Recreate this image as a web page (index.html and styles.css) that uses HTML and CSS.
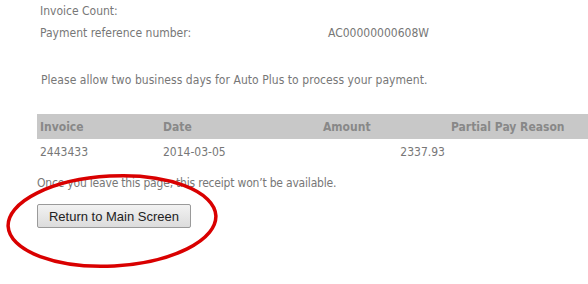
FILE: index.html
```html
<!DOCTYPE html>
<html>
<head>
<meta charset="utf-8">
<link rel="stylesheet" href="styles.css">
</head>
<body>
<div class="page">
  <div class="info">
    <div class="info-row"><span class="label">Invoice Count:</span><span class="value"></span></div>
    <div class="info-row"><span class="label">Payment reference number:</span><span class="value">AC00000000608W</span></div>
  </div>
  <p class="notice">Please allow two business days for Auto Plus to process your payment.</p>
  <table class="invoices">
    <thead>
      <tr><th class="c-inv">Invoice</th><th class="c-date">Date</th><th class="c-amt">Amount</th><th class="c-reason">Partial Pay Reason</th></tr>
    </thead>
    <tbody>
      <tr><td class="c-inv">2443433</td><td class="c-date">2014-03-05</td><td class="c-amt num">2337.93</td><td class="c-reason"></td></tr>
    </tbody>
  </table>
  <p class="leave">Once you leave this page, this receipt won’t be available.</p>
  <button class="main-btn">Return to Main Screen</button>
</div>
<svg class="circle" width="588" height="284" viewBox="0 0 588 284">
  <ellipse cx="112" cy="221" rx="104" ry="45" transform="rotate(-3 112 221)" fill="none" stroke="#d90000" stroke-width="3.5"/>
</svg>
</body>
</html>
```
FILE: styles.css
```css
html, body { margin: 0; padding: 0; background: #fff; }
body { width: 588px; height: 284px; overflow: hidden; position: relative;
  font-family: "DejaVu Sans Condensed", "DejaVu Sans", sans-serif; font-size: 12px; color: #777; }
.page { padding: 3px 0 0 37px; }
.info { padding-left: 3px; }
.info-row { display: flex; height: 22px; line-height: 16px; }
.label { width: 288px; }
.notice { margin: 25px 0 0 4px; line-height: 16px; letter-spacing: 0.05px; }
.invoices { margin-top: 26px; width: 560px; border-collapse: collapse; }
.invoices th { background: #c8c8c8; color: #888; font-weight: bold; text-align: left; height: 25px; padding: 0 3px; font-size: 12px; }
.invoices td { height: 26px; padding: 0 3px; }
.c-inv { width: 117px; }
.c-date { width: 154px; }
.c-amt { width: 122px; }
.num { text-align: right; }
.leave { margin: 10px 0 0 0; line-height: 16px; letter-spacing: -0.2px; }
.main-btn { margin-top: 13px; width: 154px; height: 24px; font-family: "Liberation Sans", Arial, sans-serif; font-size: 13px; color: #222;
  background: linear-gradient(#f2f2f2, #dcdcdc); border: 1px solid #9a9a9a; border-radius: 2px; padding: 0; }
.circle { position: absolute; left: 0; top: 0; pointer-events: none; }
```
